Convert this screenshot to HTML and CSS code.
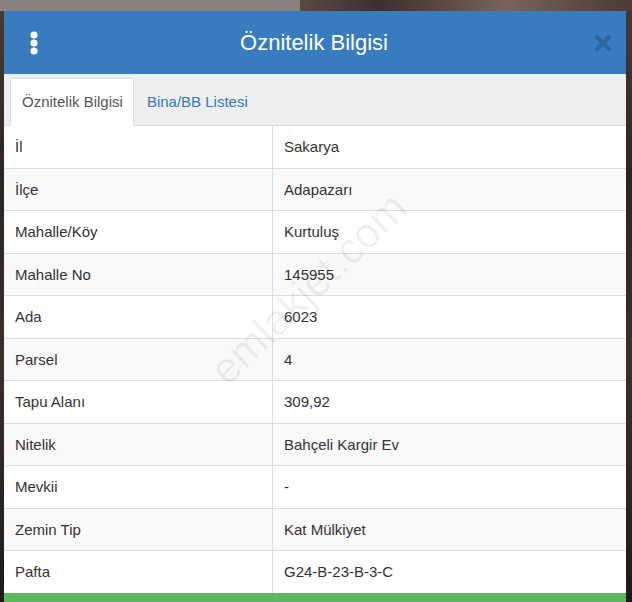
FILE: index.html
```html
<!DOCTYPE html>
<html lang="tr">
<head>
    <meta charset="UTF-8">
    <meta name="viewport" content="width=device-width, initial-scale=1.0">
    <title>Öznitelik Bilgisi</title>
    <link rel="stylesheet" href="styles.css">
</head>
<body>

    <div class="backdrop">
        <div class="backdrop-panel"></div>
    </div>

    <div class="modal">
        <div class="modal-header">
            <button class="menu-btn" title="Menü">
                <svg width="10" height="24" viewBox="0 0 10 24">
                    <circle cx="5" cy="4" r="3.6" fill="#fff"/>
                    <circle cx="5" cy="12" r="3.6" fill="#fff"/>
                    <circle cx="5" cy="20" r="3.6" fill="#fff"/>
                </svg>
            </button>
            <h2 class="modal-title">Öznitelik Bilgisi</h2>
            <button class="close-btn" title="Kapat">
                <svg width="18" height="18" viewBox="0 0 18 18">
                    <path d="M3 3 L15 15 M15 3 L3 15" stroke="#2c66a0" stroke-width="4.2" stroke-linecap="round"/>
                </svg>
            </button>
        </div>

        <ul class="nav-tabs">
            <li class="active"><a href="#">Öznitelik Bilgisi</a></li>
            <li><a href="#">Bina/BB Listesi</a></li>
        </ul>

        <div class="tab-content">
            <table class="info-table">
                <tbody>
                    <tr><td>İl</td><td>Sakarya</td></tr>
                    <tr><td>İlçe</td><td>Adapazarı</td></tr>
                    <tr><td>Mahalle/Köy</td><td>Kurtuluş</td></tr>
                    <tr><td>Mahalle No</td><td>145955</td></tr>
                    <tr><td>Ada</td><td>6023</td></tr>
                    <tr><td>Parsel</td><td>4</td></tr>
                    <tr><td>Tapu Alanı</td><td>309,92</td></tr>
                    <tr><td>Nitelik</td><td>Bahçeli Kargir Ev</td></tr>
                    <tr><td>Mevkii</td><td>-</td></tr>
                    <tr><td>Zemin Tip</td><td>Kat Mülkiyet</td></tr>
                    <tr><td>Pafta</td><td>G24-B-23-B-3-C</td></tr>
                </tbody>
            </table>
            <div class="watermark">emlakjet.com</div>
        </div>

        <div class="modal-footer"></div>
    </div>

</body>
</html>
```

FILE: styles.css
```css
body {
    font-family: 'Liberation Sans', Arial, sans-serif;
    margin: 0;
    padding: 0;
    height: 602px;
    overflow: hidden;
    background-color: #2a2422;
    background-image: linear-gradient(180deg, #4a3a34 0%, #2b2522 30%, #3a302c 60%, #1e1a19 100%);
    position: relative;
}

.backdrop {
    position: absolute;
    top: 0;
    left: 0;
    right: 0;
    height: 11px;
    background: linear-gradient(90deg, #5a4b45 0%, #6b5a52 40%, #3d302b 60%, #7a6358 80%, #4a3b35 100%);
}

.backdrop-panel {
    width: 300px;
    height: 11px;
    background-color: #8a8280;
}

.modal {
    position: relative;
    margin: 11px 6px 0 4px;
    background-color: #fff;
}

.modal-header {
    height: 63px;
    background-color: #387cbf;
    display: flex;
    align-items: center;
    padding: 0 14px 0 25px;
}

.menu-btn, .close-btn {
    background: none;
    border: none;
    padding: 0;
    cursor: pointer;
    display: flex;
}

.modal-title {
    flex: 1;
    margin: 0;
    color: #fff;
    font-size: 22px;
    font-weight: normal;
    text-align: center;
    padding-right: 5px;
}

.nav-tabs {
    list-style: none;
    margin: 0;
    padding: 4px 0 0 6px;
    background-color: #eee;
    border-bottom: 1px solid #ddd;
    display: flex;
}

.nav-tabs li {
    margin-bottom: -1px;
}

.nav-tabs a {
    display: block;
    padding: 12px 10px 13px 11px;
    font-size: 15px;
    line-height: 21px;
    color: #337ab7;
    text-decoration: none;
    border: 1px solid transparent;
    border-bottom: none;
}

.nav-tabs li + li a {
    padding-left: 12px;
}

.nav-tabs li.active a {
    color: #555;
    background-color: #fff;
    border-color: #ddd;
    padding-bottom: 14px;
}

.tab-content {
    position: relative;
    overflow: hidden;
}

.info-table {
    width: 100%;
    border-collapse: collapse;
    font-size: 15px;
    color: #333;
}

.info-table td {
    padding: 10px 10px 10px 11px;
    line-height: 21.5px;
    border-top: 1px solid #ddd;
}

.info-table tr:first-child td {
    border-top: none;
}

.info-table td:first-child {
    width: 247px;
    border-right: 1px solid #ddd;
}

.info-table tr:nth-child(even) {
    background-color: #f9f9f9;
}

.watermark {
    position: absolute;
    left: 178px;
    top: 138px;
    font-size: 43px;
    color: rgba(0, 0, 0, 0.06);
    transform: rotate(-44deg);
    white-space: nowrap;
    pointer-events: none;
}

.modal-footer {
    height: 12px;
    background-color: #5cb85c;
}
```
